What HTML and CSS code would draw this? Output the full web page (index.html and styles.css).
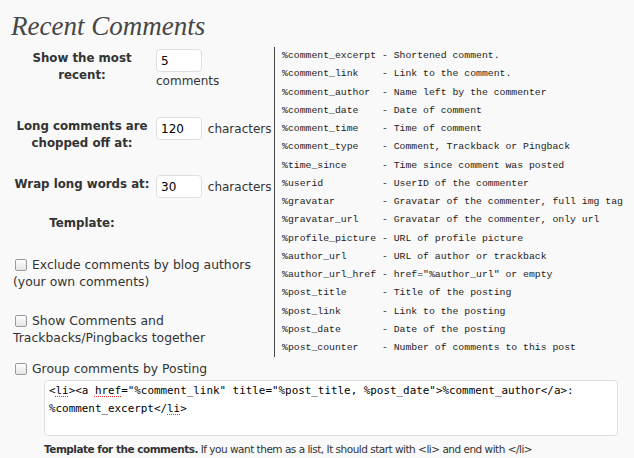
FILE: index.html
```html
<!DOCTYPE html>
<html>
<head>
<meta charset="utf-8">
<link rel="stylesheet" href="styles.css">
</head>
<body>
<div class="page">
  <h2 class="title">Recent Comments</h2>
  <div class="main">
    <div class="left">
      <div class="row row1">
        <div class="lbl">Show the most recent:</div>
        <div class="val"><input class="num" type="text" value="5"> <span class="unit-below">comments</span></div>
      </div>
      <div class="row row2">
        <div class="lbl">Long comments are chopped off at:</div>
        <div class="val"><input class="num" type="text" value="120"> characters</div>
      </div>
      <div class="row row3">
        <div class="lbl">Wrap long words at:</div>
        <div class="val"><input class="num" type="text" value="30"> characters</div>
      </div>
      <div class="row row4">
        <div class="lbl">Template:</div>
        <div class="val"></div>
      </div>
      <label class="check check1"><input type="checkbox" class="cb">Exclude comments by blog authors (your own comments)</label>
      <label class="check check2"><input type="checkbox" class="cb">Show Comments and Trackbacks/Pingbacks together</label>
    </div>
<pre class="vars">%comment_excerpt - Shortened comment.
%comment_link    - Link to the comment.
%comment_author  - Name left by the commenter
%comment_date    - Date of comment
%comment_time    - Time of comment
%comment_type    - Comment, Trackback or Pingback
%time_since      - Time since comment was posted
%userid          - UserID of the commenter
%gravatar        - Gravatar of the commenter, full img tag
%gravatar_url    - Gravatar of the commenter, only url
%profile_picture - URL of profile picture
%author_url      - URL of author or trackback
%author_url_href - href="%author_url" or empty
%post_title      - Title of the posting
%post_link       - Link to the posting
%post_date       - Date of the posting
%post_counter    - Number of comments to this post</pre>
  </div>
  <label class="check check3"><input type="checkbox" class="cb">Group comments by Posting</label>
  <div class="tpl" role="textbox">&lt;<span class="sp">li</span>&gt;&lt;a <span class="sp">href</span>="%comment_link" title="%post_title, %post_date"&gt;%comment_author&lt;/a&gt;:<br>%comment_excerpt&lt;/<span class="sp">li</span>&gt;</div>
  <p class="caption"><b>Template for the comments.</b> If you want them as a list, It should start with &lt;li&gt; and end with &lt;/li&gt;</p>
</div>
</body>
</html>
```
FILE: styles.css
```css
html, body {
  margin: 0;
  padding: 0;
  background: #f9f9f9;
}
.page {
  padding: 0 0 0 8px;
  font-family: "DejaVu Sans", "Lucida Grande", sans-serif;
  font-size: 12px;
  color: #333;
  width: 626px;
  height: 458px;
  overflow: hidden;
}
.title {
  margin: 0;
  padding: 12px 0 0 3px;
  height: 47px;
  box-sizing: border-box;
  font-family: "Liberation Serif", serif;
  font-style: italic;
  font-weight: normal;
  font-size: 27px;
  line-height: 29px;
  color: #464646;
}
.main {
  display: flex;
  align-items: flex-start;
}
.left {
  width: 266px;
  flex: none;
}
.row {
  display: grid;
  grid-template-columns: 148px 1fr;
  align-items: start;
  line-height: 17px;
}
.lbl {
  font-weight: bold;
  text-align: center;
  padding: 1px 0 0;
  font-size: 11.8px;
}
.val {
  line-height: 18px;
}
.unit-below {
  display: block;
}
.row1 { margin-top: 2px; }
.row2 { margin-top: 27px; }
.row3 { margin-top: 23px; }
.row4 { margin-top: 16px; }
.num {
  box-sizing: border-box;
  width: 46px;
  height: 23px;
  margin: 0 2px 0 0;
  padding: 0 4px;
  border: 1px solid #dfdfdf;
  border-radius: 4px;
  background: #fff;
  font-family: "DejaVu Sans", sans-serif;
  font-size: 12px;
  color: #000;
  vertical-align: baseline;
}
.check {
  display: block;
  line-height: 17px;
  font-size: 12.4px;
  padding-left: 5px;
}
.check1 { margin-top: 24px; }
.check2 { margin-top: 22px; }
.check3 { margin-top: 3px; }
.cb {
  appearance: none;
  -webkit-appearance: none;
  width: 12px;
  height: 12px;
  margin: 0 5px 0 2px;
  border: 1px solid #9a9a9a;
  border-radius: 2px;
  background: linear-gradient(#fdfdfd, #e6e6e6);
  vertical-align: -2px;
  box-sizing: border-box;
}
.vars {
  margin: 0;
  padding: 0 0 0 7px;
  border-left: 1px solid #444;
  font-family: "Liberation Mono", "Courier New", monospace;
  font-size: 9.8px;
  line-height: 18.25px;
  color: #222;
}
.tpl {
  box-sizing: border-box;
  margin: 3px 0 0 36px;
  width: 574px;
  height: 56px;
  padding: 1px 4px;
  border: 1px solid #dfdfdf;
  border-radius: 4px;
  background: #fff;
  font-family: "DejaVu Sans Mono", monospace;
  font-size: 10.9px;
  line-height: 18px;
  color: #000;
}
.sp {
  text-decoration: underline dotted #d33;
  text-underline-offset: 2px;
}
.caption {
  margin: 6px 0 0 36px;
  font-size: 10.5px;
  letter-spacing: -0.5px;
  line-height: 14px;
  color: #333;
}
```
